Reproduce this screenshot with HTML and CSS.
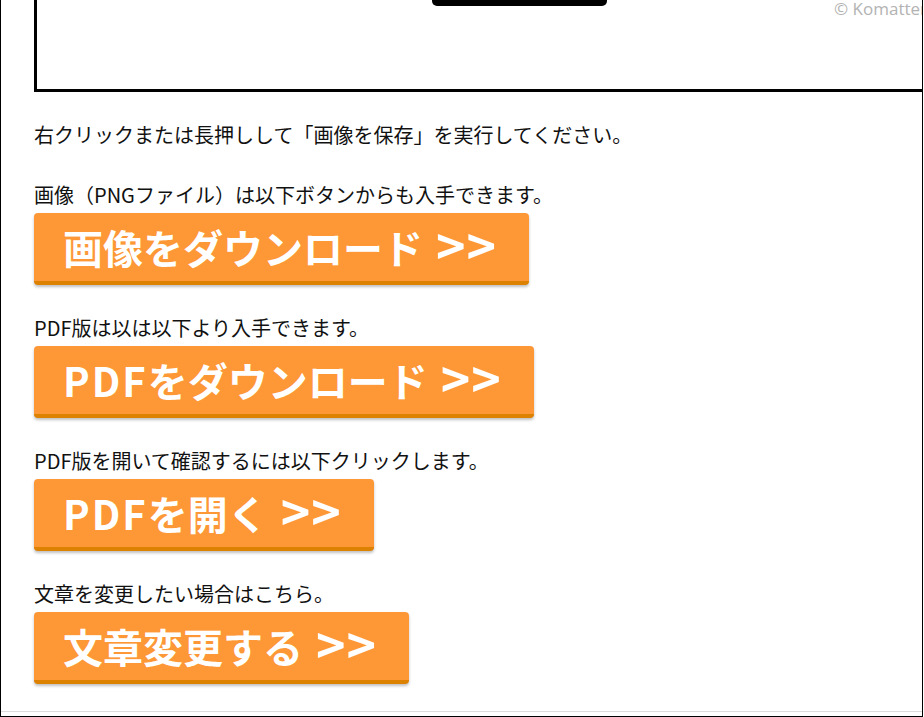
FILE: index.html
```html
<!DOCTYPE html>
<html lang="ja">
<head>
<meta charset="utf-8">
<link rel="stylesheet" href="styles.css">
</head>
<body>
<div class="frame">
  <div class="preview">
    <div class="preview-tab"></div>
    <div class="credit">© Komatter</div>
  </div>
  <div class="content">
    <p class="note first">右クリックまたは長押しして「画像を保存」を実行してください。</p>
    <p class="note">画像（PNGファイル）は以下ボタンからも入手できます。</p>
    <a class="btn">画像をダウンロード <span class="arrow">&gt;&gt;</span></a>
    <p class="note">PDF版は以は以下より入手できます。</p>
    <a class="btn"><span class="latin">PDF</span>をダウンロード <span class="arrow">&gt;&gt;</span></a>
    <p class="note">PDF版を開いて確認するには以下クリックします。</p>
    <a class="btn"><span class="latin">PDF</span>を開く <span class="arrow">&gt;&gt;</span></a>
    <p class="note">文章を変更したい場合はこちら。</p>
    <a class="btn">文章変更する <span class="arrow">&gt;&gt;</span></a>
  </div>
  <div class="rule"></div>
</div>
</body>
</html>
```

FILE: styles.css
```css
html, body {
  margin: 0;
  padding: 0;
  background: #fff;
  overflow: hidden;
}
body {
  width: 924px;
  height: 717px;
  font-family: "Noto Sans CJK JP", "Noto Sans", sans-serif;
  color: #111;
}
.frame {
  box-sizing: border-box;
  width: 923px;
  height: 717px;
  border-left: 1px solid #000;
  border-right: 1px solid #000;
  border-bottom: 1px solid #000;
  overflow: hidden;
  position: relative;
  display: flex;
  flex-direction: column;
}
.preview {
  position: relative;
  margin-left: 33px;
  width: 1000px;
  height: 89px;
  flex: none;
  border-left: 3px solid #000;
  border-bottom: 3px solid #000;
}
.preview-tab {
  position: absolute;
  left: 395px;
  top: 0;
  width: 175px;
  height: 6px;
  background: #000;
  border-radius: 0 0 5px 5px;
}
.credit {
  position: absolute;
  left: 797px;
  top: -3px;
  font-family: "Open Sans", "Noto Sans", sans-serif;
  font-size: 17px;
  color: #b3b3b3;
  white-space: nowrap;
}
.content {
  padding-left: 33px;
  display: flex;
  flex-direction: column;
  align-items: flex-start;
  flex: 1;
}
.note {
  margin: 28px 0 3px;
  font-size: 20px;
  line-height: 30px;
  height: 30px;
  white-space: nowrap;
}
.note.first {
  margin: 28px 0 30px;
}
.note.first + .note {
  margin-top: 0;
}
.btn {
  display: inline-block;
  box-sizing: border-box;
  height: 72px;
  padding: 4px 32px 0 29px;
  background: #fe9736;
  border-bottom: 4px solid #dd8100;
  border-radius: 4px;
  box-shadow: 0 2px 3px rgba(0, 0, 0, 0.25);
  color: #fff;
  font-weight: bold;
  font-size: 40px;
  line-height: 60px;
  white-space: nowrap;
  cursor: pointer;
}
.latin {
  letter-spacing: 2px;
}
.arrow {
  margin-left: 4px;
  letter-spacing: 1px;
  font-size: 50px;
  line-height: 50px;
  vertical-align: -1px;
}
.rule {
  flex: none;
  height: 1px;
  background: #dcdcdc;
  margin-bottom: 4px;
}
```
